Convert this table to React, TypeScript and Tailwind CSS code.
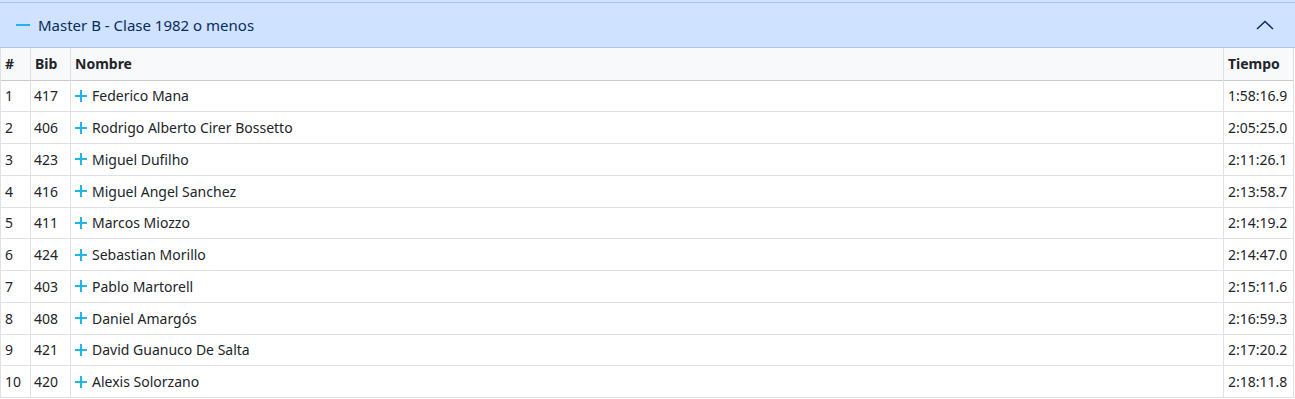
import React from "react";

const rows: [number, string, string, string][] = [
  [1, "417", "Federico Mana", "1:58:16.9"],
  [2, "406", "Rodrigo Alberto Cirer Bossetto", "2:05:25.0"],
  [3, "423", "Miguel Dufilho", "2:11:26.1"],
  [4, "416", "Miguel Angel Sanchez", "2:13:58.7"],
  [5, "411", "Marcos Miozzo", "2:14:19.2"],
  [6, "424", "Sebastian Morillo", "2:14:47.0"],
  [7, "403", "Pablo Martorell", "2:15:11.6"],
  [8, "408", "Daniel Amargós", "2:16:59.3"],
  [9, "421", "David Guanuco De Salta", "2:17:20.2"],
  [10, "420", "Alexis Solorzano", "2:18:11.8"],
];

function Plus() {
  return (
    <svg width="12" height="12" viewBox="0 0 12 12" className="shrink-0">
      <path d="M6 0V12M0 6H12" stroke="#22b5ea" strokeWidth="2" />
    </svg>
  );
}

export default function App() {
  return (
    <div className="w-[1295px] bg-white font-['Segoe_UI','Noto_Sans',sans-serif] text-[14px] text-[#212529]">
      <div className="bg-[#cfe2ff] pt-[2px]">
        <div className="h-[46px] border-t border-b border-[#a6c4ef] flex items-center pl-[16px] pr-[21px] text-[#072c5e]">
          <svg width="14" height="4" viewBox="0 0 14 4" className="mr-[8px]">
            <path d="M0 2H14" stroke="#22b5ea" strokeWidth="2" />
          </svg>
          <span className="text-[15px]">Master B - Clase 1982 o menos</span>
          <div className="flex-1" />
          <svg width="18" height="10" viewBox="0 0 18 10">
            <path d="M1 9L9 1.5L17 9" stroke="#072c5e" strokeWidth="1.5" fill="none" />
          </svg>
        </div>
      </div>
      <table className="w-[1294px] border-collapse table-fixed">
        <colgroup>
          <col className="w-[30px]" />
          <col className="w-[40px]" />
          <col />
          <col className="w-[70px]" />
        </colgroup>
        <thead>
          <tr className="h-[32px] bg-[#f8f9fa] border-b border-[#c8cacc]">
            <th className="border-l border-[#dee2e6] px-[4px] text-left font-bold">#</th>
            <th className="border-l border-[#dee2e6] px-[4px] text-left font-bold">Bib</th>
            <th className="border-l border-[#dee2e6] px-[4px] text-left font-bold">Nombre</th>
            <th className="border-l border-r border-[#dee2e6] px-[4px] text-left font-bold">Tiempo</th>
          </tr>
        </thead>
        <tbody>
          {rows.map(([n, bib, name, time]) => (
            <tr key={n} className="h-[31.75px] border-b border-[#dee2e6]">
              <td className="border-l border-[#dee2e6] px-[4px]">{n}</td>
              <td className="border-l border-[#dee2e6] px-[3px]">{bib}</td>
              <td className="border-l border-[#dee2e6] px-[4px]">
                <div className="flex items-center gap-[5px]">
                  <Plus />
                  <span>{name}</span>
                </div>
              </td>
              <td className="border-l border-r border-[#dee2e6] px-[4px]">{time}</td>
            </tr>
          ))}
        </tbody>
      </table>
    </div>
  );
}
